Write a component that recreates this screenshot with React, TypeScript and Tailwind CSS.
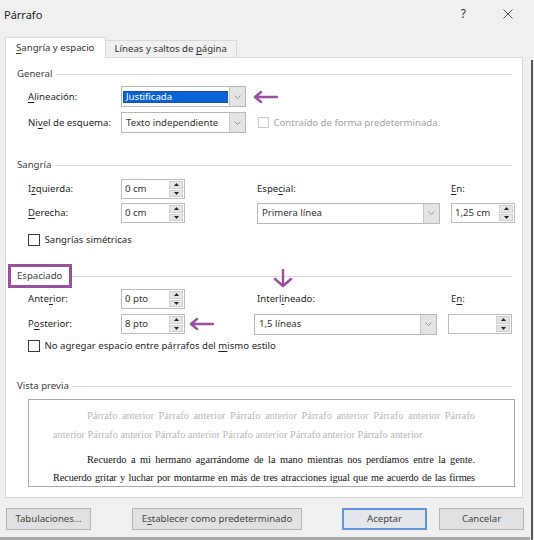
import type { ReactNode } from "react";

const U = ({ children }: { children: ReactNode }) => (
  <span className="underline underline-offset-[1.5px] decoration-[0.5px]">{children}</span>
);

function Header({ children }: { children: ReactNode }) {
  return (
    <div className="flex h-[14px] items-center gap-[4px] text-[#404040]">
      <span>{children}</span>
      <div className="h-px flex-1 bg-[#dcdcdc]" />
    </div>
  );
}

function Label({ children }: { children: ReactNode }) {
  return <div className="w-[93px] shrink-0">{children}</div>;
}

function Triangle({ up }: { up?: boolean }) {
  return (
    <svg width="5" height="3" viewBox="0 0 5 3">
      <path d={up ? "M0 3 L2.5 0 L5 3 Z" : "M0 0 L2.5 3 L5 0 Z"} fill="#222" />
    </svg>
  );
}

function Spinner({ value }: { value?: string }) {
  return (
    <div className="flex h-[20px] w-[64px] shrink-0 border border-[#bcbcbc] bg-white">
      <div className="flex flex-1 items-center pl-[3px] text-[#333]">{value}</div>
      <div className="flex w-[16px] flex-col gap-px p-px">
        <div className="flex flex-1 items-center justify-center border border-[#cfcfcf] bg-[#e6e6e6]">
          <Triangle up />
        </div>
        <div className="flex flex-1 items-center justify-center border border-[#cfcfcf] bg-[#e6e6e6]">
          <Triangle />
        </div>
      </div>
    </div>
  );
}

function Chevron() {
  return (
    <svg width="7" height="4" viewBox="0 0 7 4">
      <path d="M0.5 0.5 L3.5 3.5 L6.5 0.5" fill="none" stroke="#8a8a8a" strokeWidth="0.9" />
    </svg>
  );
}

function Select({ value, wide, selected }: { value: string; wide?: boolean; selected?: boolean }) {
  return (
    <div
      className={
        wide
          ? "flex h-[21px] w-[183px] shrink-0 border border-[#b8b8b8] bg-white"
          : "flex h-[21px] w-[125px] shrink-0 border border-[#b8b8b8] bg-white"
      }
    >
      <div className="flex flex-1 items-center pl-px pr-px">
        {selected ? (
          <div className="flex h-[12px] flex-1 items-center border border-[#1a4fa8] bg-[#0a64d8] pl-[2px] text-white">
            {value}
          </div>
        ) : (
          <span className="pl-[3px] text-[#333]">{value}</span>
        )}
      </div>
      <div className="flex w-[16px] items-center justify-center border-l border-[#c8c8c8] bg-[#e4e4e4]">
        <Chevron />
      </div>
    </div>
  );
}

function Checkbox({ disabled }: { disabled?: boolean }) {
  return (
    <div
      className={
        disabled
          ? "h-[11.5px] w-[11.5px] shrink-0 border border-[#cacaca] bg-white"
          : "h-[11.5px] w-[11.5px] shrink-0 border border-[#3a3a3a] bg-white"
      }
    />
  );
}

function LeftArrow() {
  return (
    <svg width="25" height="12" viewBox="0 0 25 12">
      <path d="M24 6 H2 M8 1 L2 6 L8 11" fill="none" stroke="#9b4f9f" strokeWidth="2.4" strokeLinecap="round" strokeLinejoin="round" />
    </svg>
  );
}

function DownArrow() {
  return (
    <svg width="22" height="19" viewBox="0 0 22 19">
      <path d="M11 1 V17 M3 10 L11 17 L19 10" fill="none" stroke="#9b4f9f" strokeWidth="2.4" strokeLinecap="round" strokeLinejoin="round" />
    </svg>
  );
}

function Button({ children, primary, w }: { children: ReactNode; primary?: boolean; w: "sm" | "lg" }) {
  const base = w === "lg" ? "w-[170px]" : "w-[85px]";
  return (
    <div
      className={
        primary
          ? `flex h-[22px] ${base} items-center justify-center border-2 border-[#5e95dd] bg-[#e3e6ea] text-[#444]`
          : `flex h-[22px] ${base} items-center justify-center border border-[#b5b5b5] bg-[#e1e1e1] text-[#444]`
      }
    >
      {children}
    </div>
  );
}

export default function App() {
  return (
    <div className="flex h-[540px] w-[534px] bg-[#f0f0f0] font-['Noto_Sans',sans-serif] text-[9.6px] leading-none text-[#1f1f1f]">
      <div className="flex w-[530px] flex-col">
        {/* title bar */}
        <div className="flex h-[28px] items-center pl-[4px] pr-[17px]">
          <span className="text-[11px] text-[#222]">Párrafo</span>
          <span className="ml-auto text-[12px] text-[#333]">?</span>
          <svg className="ml-[37px]" width="10" height="10" viewBox="0 0 10 10">
            <path d="M0.5 0.5 L9.5 9.5 M9.5 0.5 L0.5 9.5" stroke="#444" strokeWidth="0.9" />
          </svg>
        </div>

        {/* tabs */}
        <div className="relative z-10 -mb-px ml-[5px] mt-[9px] flex items-end">
          <div className="flex h-[21px] w-[100.5px] items-center justify-center border border-b-0 border-[#d9d9d9] bg-white text-[#333]">
            <span>
              <U>S</U>angría y espacio
            </span>
          </div>
          <div className="mb-px flex h-[17px] w-[131.5px] items-center justify-center border border-b-0 border-l-0 border-[#d9d9d9] bg-[#f0f0f0] text-[#333]">
            <span>
              Líneas y saltos de <U>p</U>ágina
            </span>
          </div>
        </div>

        {/* panel */}
        <div className="ml-[5px] flex h-[441px] w-[518px] flex-col border border-[#d9d9d9] bg-white pl-[11px] pr-[10px] pt-[9px]">
          <Header>General</Header>

          <div className="ml-[11px] mt-[5px] flex h-[21px] items-center">
            <Label>
              <U>A</U>lineación:
            </Label>
            <Select value="Justificada" selected />
            <div className="ml-[7px]">
              <LeftArrow />
            </div>
          </div>

          <div className="ml-[11px] mt-[5px] flex h-[21px] items-center">
            <Label>
              Ni<U>v</U>el de esquema:
            </Label>
            <Select value="Texto independiente" />
            <div className="ml-[11.5px]">
              <Checkbox disabled />
            </div>
            <span className="ml-[4.5px] text-[#a3a3a3]">Contraído de forma predeterminada.</span>
          </div>

          <div className="mt-[25px]">
            <Header>Sangría</Header>
          </div>

          <div className="ml-[11px] mt-[7px] flex h-[20px] items-center">
            <Label>
              I<U>z</U>quierda:
            </Label>
            <Spinner value="0 cm" />
            <div className="ml-[72px] w-[194px]">
              Espe<U>c</U>ial:
            </div>
            <div>
              <U>E</U>n:
            </div>
          </div>

          <div className="ml-[11px] mt-[4px] flex h-[20px] items-center">
            <Label>
              <U>D</U>erecha:
            </Label>
            <Spinner value="0 cm" />
            <div className="ml-[72px]">
              <Select value="Primera línea" wide />
            </div>
            <div className="ml-[11px]">
              <Spinner value="1,25 cm" />
            </div>
          </div>

          <div className="ml-[11px] mt-[10px] flex h-[14px] items-center gap-[5px]">
            <Checkbox />
            <span>Sangrías simétricas</span>
          </div>

          <div className="relative mt-[22px] flex h-[14px] items-center text-[#404040]">
            <span className="-my-[5px] -ml-[9.5px] border-[3px] border-[#9b4f9f] py-[4.5px] pl-[6.5px] pr-[6.5px]">
              Espaciado
            </span>
            <div className="h-px flex-1 bg-[#dcdcdc]" />
            <div className="absolute left-[255px] top-[-0.5px]">
              <DownArrow />
            </div>
          </div>

          <div className="ml-[11px] mt-[6px] flex h-[20px] items-center">
            <Label>
              Ante<U>r</U>ior:
            </Label>
            <Spinner value="0 pto" />
            <div className="ml-[72px] w-[194px]">
              Interl<U>i</U>neado:
            </div>
            <div>
              E<U>n</U>:
            </div>
          </div>

          <div className="ml-[11px] mt-[5px] flex h-[20px] items-center">
            <Label>
              P<U>o</U>sterior:
            </Label>
            <Spinner value="8 pto" />
            <div className="flex w-[72px] pl-[4px]">
              <LeftArrow />
            </div>
            <Select value="1,5 líneas" wide />
            <div className="ml-[11px]">
              <Spinner />
            </div>
          </div>

          <div className="ml-[11px] mt-[5px] flex h-[14px] items-center gap-[5px]">
            <Checkbox />
            <span>
              No agregar espacio entre párrafos del <U>m</U>ismo estilo
            </span>
          </div>

          <div className="mt-[26px]">
            <Header>Vista previa</Header>
          </div>

          <div className="ml-[11px] mt-[6px] h-[88px] w-[487px] overflow-hidden border border-[#a8a8a8] bg-white pl-[24px] pr-[39px] pt-[7px] font-['Liberation_Serif',serif] text-[10.3px] leading-[18.5px]">
            <div className="text-[#b8b8b8]">
              <div className="whitespace-nowrap pl-[34px] [text-align-last:justify]">
                Párrafo anterior Párrafo anterior Párrafo anterior Párrafo anterior Párrafo anterior Párrafo
              </div>
              <div className="whitespace-nowrap">
                anterior Párrafo anterior Párrafo anterior Párrafo anterior Párrafo anterior Párrafo anterior
              </div>
            </div>
            <div className="mt-[6.5px] text-[#111]">
              <div className="whitespace-nowrap pl-[34px] [text-align-last:justify]">
                Recuerdo a mi hermano agarrándome de la mano mientras nos perdíamos entre la gente.
              </div>
              <div className="whitespace-nowrap tracking-[-0.1px] [text-align-last:justify]">
                Recuerdo gritar y luchar por montarme en más de tres atracciones igual que me acuerdo de las firmes
              </div>
            </div>
          </div>
        </div>

        {/* buttons */}
        <div className="mt-[10px] flex items-center">
          <div className="ml-[6px]">
            <Button w="sm">Tabulaciones...</Button>
          </div>
          <div className="ml-[41px]">
            <Button w="lg">
              <span>
                E<U>s</U>tablecer como predeterminado
              </span>
            </Button>
          </div>
          <div className="ml-[40px]">
            <Button w="sm" primary>
              Aceptar
            </Button>
          </div>
          <div className="ml-[12px]">
            <Button w="sm">Cancelar</Button>
          </div>
        </div>

        <div className="mt-auto h-[3px] bg-[#a9a9a9]" />
      </div>
      <div className="flex w-[4px] flex-col pt-[60px]">
        <div className="ml-px h-full w-[2px] bg-[#5a5a5a]" />
      </div>
    </div>
  );
}
